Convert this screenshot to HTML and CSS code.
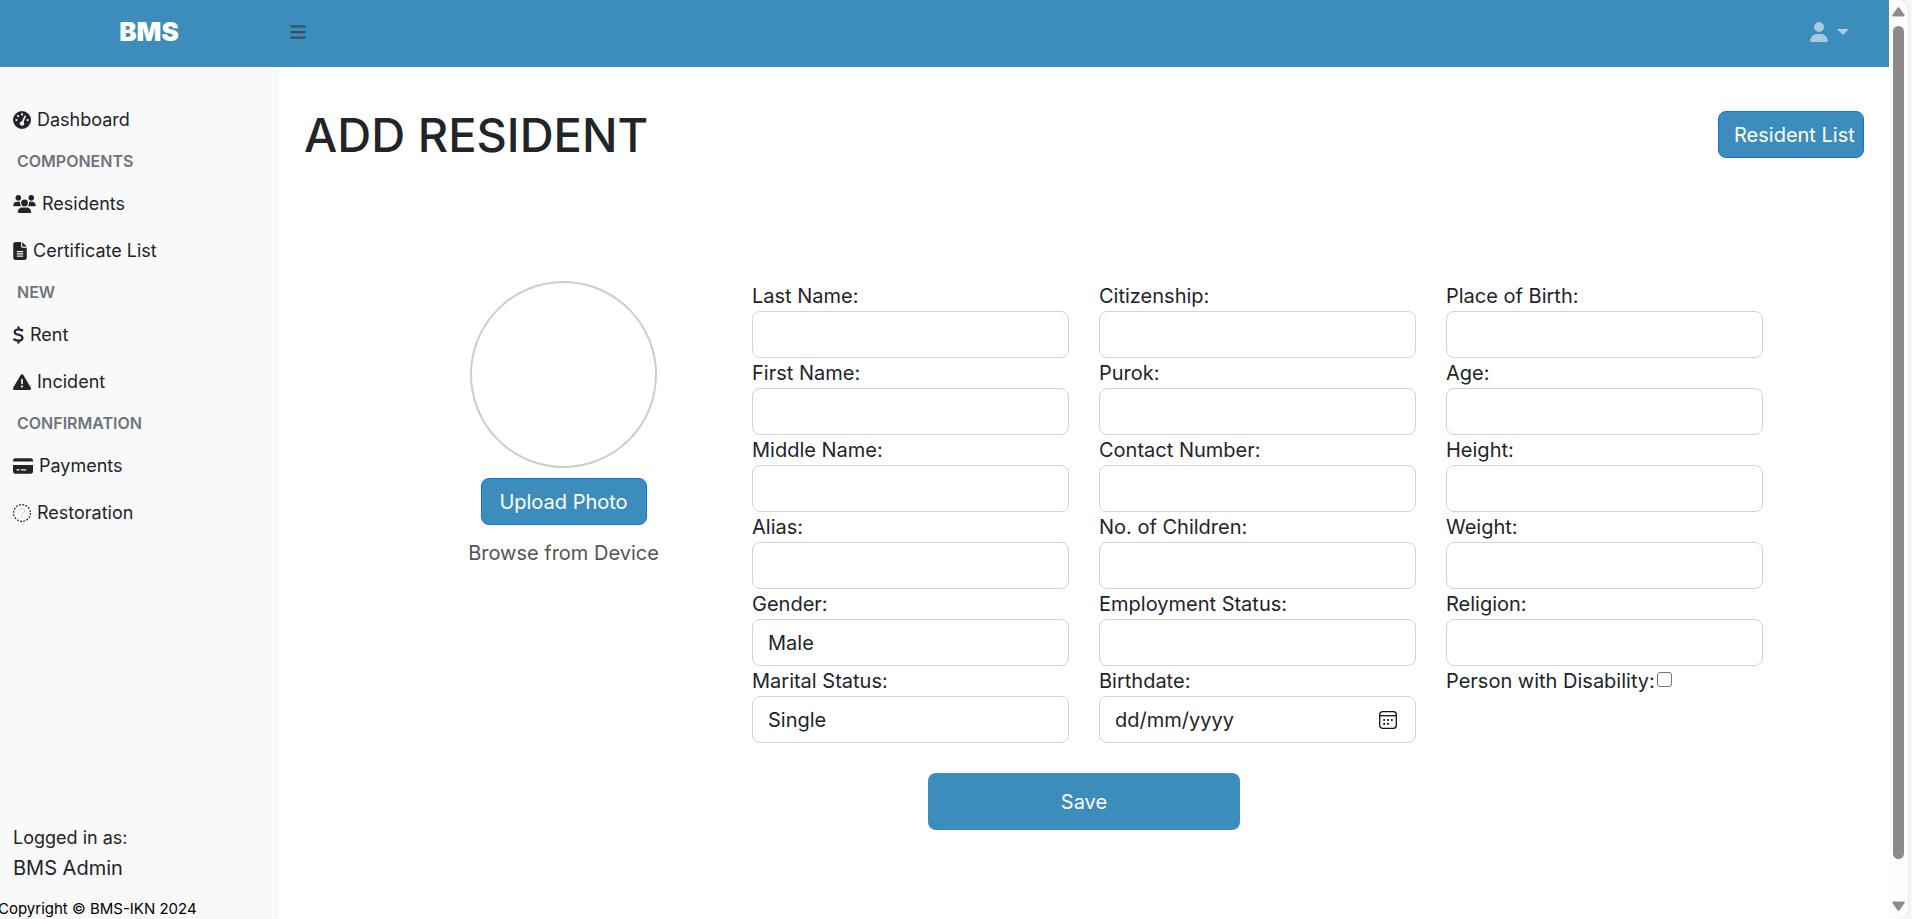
FILE: index.html
```html
<!DOCTYPE html>
<html lang="en-GB">
<head>
<meta charset="utf-8">
<meta name="viewport" content="width=device-width, initial-scale=1">
<title>BMS - Add Resident</title>
<link rel="stylesheet" href="styles.css">
</head>
<body>
<div class="app">
  <header class="topnav">
    <a class="brand" href="#">BMS</a>
    <button class="menu-toggle" type="button" aria-label="Toggle sidebar">
      <svg width="16" height="18" viewBox="0 0 448 512" fill="currentColor"><rect y="64" width="448" height="64" rx="32"/><rect y="224" width="448" height="64" rx="32"/><rect y="384" width="448" height="64" rx="32"/></svg>
    </button>
    <button class="user-menu" type="button" aria-label="User menu">
      <svg width="18" height="20" viewBox="0 0 448 512" fill="currentColor"><path d="M224 256A128 128 0 1 0 224 0a128 128 0 1 0 0 256zm-45.700 48C79.800 304 0 383.800 0 482.300C0 498.700 13.300 512 29.700 512H418.300c16.400 0 29.700-13.300 29.700-29.700C448 383.800 368.200 304 269.700 304H178.300z"/></svg>
      <span class="caret"></span>
    </button>
  </header>

  <aside class="sidebar">
    <nav class="side-links">
      <a class="side-link" href="#"><svg width="18" height="18" viewBox="0 0 512 512" fill="currentColor"><path fill-rule="evenodd" d="M0 256a256 256 0 1 1 512 0A256 256 0 1 1 0 256zM288 96a32 32 0 1 0-64 0 32 32 0 1 0 64 0zM256 416c35.300 0 64-28.700 64-64 0-17.400-6.900-33.100-18.100-44.600L366 161.700c5.300-12.100-.2-26.300-12.300-31.600s-26.300.2-31.600 12.300L257.900 288H256c-35.300 0-64 28.700-64 64s28.700 64 64 64zM176 144a32 32 0 1 0-64 0 32 32 0 1 0 64 0zM96 288a32 32 0 1 0 0-64 32 32 0 1 0 0 64zM416 288a32 32 0 1 0 0-64 32 32 0 1 0 0 64z"/></svg>Dashboard</a>
      <h2 class="side-heading">COMPONENTS</h2>
      <a class="side-link" href="#"><svg width="23" height="18" viewBox="0 0 640 512" fill="currentColor"><path d="M144 0a80 80 0 1 1 0 160A80 80 0 1 1 144 0zM512 0a80 80 0 1 1 0 160A80 80 0 1 1 512 0zM0 298.700C0 239.800 47.800 192 106.700 192h42.700c15.900 0 31 3.500 44.600 9.700-1.300 7.200-1.900 14.700-1.900 22.300 0 38.200 16.800 72.500 43.300 96H21.300C9.600 320 0 310.400 0 298.700zM405.300 320h-.7c26.600-23.500 43.300-57.800 43.300-96 0-7.600-.7-15-1.900-22.300 13.600-6.300 28.700-9.700 44.600-9.700h42.700C592.200 192 640 239.800 640 298.700c0 11.800-9.600 21.300-21.300 21.300H405.300zM224 224a96 96 0 1 1 192 0 96 96 0 1 1-192 0zM128 485.300C128 411.700 187.700 352 261.300 352h117.400C452.300 352 512 411.700 512 485.300c0 14.700-11.900 26.700-26.700 26.700H154.700c-14.700 0-26.700-11.900-26.700-26.700z"/></svg>Residents</a>
      <a class="side-link" href="#"><svg width="14" height="18" viewBox="0 0 384 512" fill="currentColor"><path fill-rule="evenodd" d="M64 0C28.700 0 0 28.700 0 64v384c0 35.300 28.700 64 64 64h256c35.300 0 64-28.700 64-64V160H256c-17.700 0-32-14.300-32-32V0H64zM256 0v128h128L256 0zM112 256h160a16 16 0 0 1 0 32H112a16 16 0 0 1 0-32zm0 64h160a16 16 0 0 1 0 32H112a16 16 0 0 1 0-32zm0 64h160a16 16 0 0 1 0 32H112a16 16 0 0 1 0-32z"/></svg>Certificate List</a>
      <h2 class="side-heading">NEW</h2>
      <a class="side-link" href="#"><svg width="11" height="18" viewBox="0 0 320 512" fill="none" stroke="currentColor" stroke-width="64" stroke-linecap="round"><path d="M160 32v50M160 430v50M270 122c-50-20-95-30-135-26C30 106 20 215 130 242l60 15c120 30 110 155-10 160-50 2-105-12-145-32"/></svg>Rent</a>
      <a class="side-link" href="#"><svg width="18" height="18" viewBox="0 0 512 512" fill="currentColor"><path fill-rule="evenodd" d="M256 32c14.200 0 27.300 7.500 34.500 19.800l216 368c7.300 12.400 7.300 27.700.2 40.100S486.300 480 472 480H40c-14.300 0-27.600-7.700-34.700-20.100s-7-27.800.2-40.100l216-368C228.700 39.500 241.800 32 256 32zm0 128c-13.300 0-24 10.700-24 24v112a24 24 0 0 0 48 0V184c0-13.300-10.700-24-24-24zm32 224a32 32 0 1 0-64 0 32 32 0 1 0 64 0z"/></svg>Incident</a>
      <h2 class="side-heading">CONFIRMATION</h2>
      <a class="side-link" href="#"><svg width="20" height="18" viewBox="0 0 576 512" fill="currentColor"><path fill-rule="evenodd" d="M64 32C28.700 32 0 60.700 0 96v32h576V96c0-35.300-28.700-64-64-64H64zM576 224H0v192c0 35.300 28.700 64 64 64h448c35.300 0 64-28.700 64-64V224zM112 352h64a16 16 0 0 1 0 32h-64a16 16 0 0 1 0-32zm128 0h128a16 16 0 0 1 0 32H240a16 16 0 0 1 0-32z"/></svg>Payments</a>
      <a class="side-link" href="#"><svg width="18" height="18" viewBox="0 0 18 18" fill="none" stroke="currentColor"><circle cx="9" cy="9" r="8.400" stroke-width="1.200" stroke-dasharray="1.900 1.398"/><path d="M6.500 6.500c.3-1.300 1.300-1.800 2.600-1.800 1.600 0 2.700.8 2.700 2 0 1.700-2.700 1.700-2.700 3.800M9.100 12v1.400" stroke-opacity=".2"/></svg>Restoration</a>
    </nav>
    <div class="side-footer">
      <div class="logged">Logged in as:</div>
      <div class="username">BMS Admin</div>
      <div class="copyright">Copyright © BMS-IKN 2024</div>
    </div>
  </aside>

  <main class="main">
    <div class="page-head">
      <h1 class="title">ADD RESIDENT</h1>
      <a class="btn btn-list" href="#">Resident List</a>
    </div>

    <form class="resident-form">
      <div class="fields">
        <div class="photo-col">
          <div class="photo"></div>
          <button class="btn btn-upload" type="button">Upload Photo</button>
          <span class="browse">Browse from Device</span>
        </div>
        <div class="col">
          <label for="last">Last Name:</label><input class="control" id="last" type="text">
          <label for="first">First Name:</label><input class="control" id="first" type="text">
          <label for="middle">Middle Name:</label><input class="control" id="middle" type="text">
          <label for="alias">Alias:</label><input class="control" id="alias" type="text">
          <label for="gender">Gender:</label><select class="control" id="gender"><option>Male</option><option>Female</option></select>
          <label for="marital">Marital Status:</label><select class="control" id="marital"><option>Single</option><option>Married</option></select>
        </div>
        <div class="col">
          <label for="citizenship">Citizenship:</label><input class="control" id="citizenship" type="text">
          <label for="purok">Purok:</label><input class="control" id="purok" type="text">
          <label for="contact">Contact Number:</label><input class="control" id="contact" type="text">
          <label for="children">No. of Children:</label><input class="control" id="children" type="text">
          <label for="employment">Employment Status:</label><input class="control" id="employment" type="text">
          <label for="birthdate">Birthdate:</label>
          <div class="control date">
            <input class="date-input" id="birthdate" type="text" placeholder="dd/mm/yyyy">
            <button class="date-button" type="button" aria-label="Open calendar">
              <svg width="18" height="18" viewBox="0 0 18 18" fill="none" stroke="#111" stroke-width="1.300"><rect x=".7" y=".7" width="16.600" height="16.600" rx="3"/><path d="M.7 4.700h16.600"/><g fill="#111" stroke="none"><circle cx="5.200" cy="9" r="1.100"/><circle cx="9" cy="9" r="1.100"/><circle cx="12.800" cy="9" r="1.100"/><circle cx="5.200" cy="12.800" r="1.100"/><circle cx="9" cy="12.800" r="1.100"/></g></svg>
            </button>
          </div>
        </div>
        <div class="col">
          <label for="birthplace">Place of Birth:</label><input class="control" id="birthplace" type="text">
          <label for="age">Age:</label><input class="control" id="age" type="text">
          <label for="height">Height:</label><input class="control" id="height" type="text">
          <label for="weight">Weight:</label><input class="control" id="weight" type="text">
          <label for="religion">Religion:</label><input class="control" id="religion" type="text">
          <div class="check-row"><label for="pwd">Person with Disability:</label><input class="check" id="pwd" type="checkbox"></div>
        </div>
      </div>
      <button class="save" type="submit">Save</button>
    </form>
  </main>
</div>
<div class="scrollbar" aria-hidden="true">
  <div class="track">
    <svg width="13" height="10" viewBox="0 0 13 10" fill="#8b8b8b"><path d="M5.500.8Q6.500-.4 7.500.8L12.400 7.800Q13.200 9.500 11.500 9.500H1.500Q-.2 9.500.6 7.800z"/></svg>
    <div class="thumb-area"><div class="thumb"></div></div>
    <svg width="13" height="10" viewBox="0 0 13 10" fill="#8b8b8b"><path d="M5.500 9.200Q6.500 10.400 7.500 9.200L12.400 2.200Q13.200.5 11.500.5H1.500Q-.2.5.6 2.200z"/></svg>
  </div>
</div>
</body>
</html>
```

FILE: styles.css
```css
* { box-sizing: border-box; }

body {
  margin: 0;
  display: flex;
  min-height: 100vh;
  font-family: Inter, "Noto Sans", sans-serif;
  font-size: 20px;
  line-height: 30px;
  color: #212529;
  background: #fff;
}

a { color: inherit; text-decoration: none; }

button, input, select {
  font: inherit;
  color: inherit;
}

button { cursor: pointer; }

.app {
  flex: 1;
  min-width: 0;
  display: grid;
  grid-template-columns: 279px 1fr;
  grid-template-rows: 67px 1fr;
}

/* Top bar */
.topnav {
  grid-column: 1 / -1;
  display: flex;
  align-items: center;
  padding-bottom: 3px;
  background: #3c8dbc;
}

.brand {
  width: 279px;
  padding-left: 19px;
  text-align: center;
  color: #fff;
  font-size: 26px;
  font-weight: 900;
}

.menu-toggle, .user-menu {
  display: flex;
  align-items: center;
  padding: 0;
  border: 0;
  background: none;
}

.menu-toggle {
  margin-left: 11px;
  color: #35535c;
}

.user-menu {
  gap: 9px;
  margin-left: auto;
  padding-right: 40px;
  color: #a9cbe1;
}

.caret {
  border: 6px solid transparent;
  border-top-color: currentColor;
  border-bottom: 0;
}

/* Sidebar */
.sidebar {
  display: flex;
  flex-direction: column;
  justify-content: space-between;
  background: #f9f9f9;
}

.side-links { padding-top: 29px; }

.side-link {
  display: flex;
  align-items: center;
  gap: 6px;
  height: 47px;
  padding-left: 13px;
  font-size: 18px;
}

.side-heading {
  margin: 0;
  padding-left: 17px;
  font-size: 16px;
  font-weight: 600;
  line-height: 37px;
  color: #6c757d;
}

.side-footer { padding-left: 13px; }

.logged { font-size: 18px; }

.copyright {
  margin: 16px 0 0 -15px;
  font-size: 15px;
  line-height: 20px;
  color: #000;
}

/* Main area */
.main { padding: 44px 25px 80px; }

.page-head {
  display: flex;
  justify-content: space-between;
  align-items: center;
}

.title {
  margin: 0;
  font-size: 47px;
  font-weight: 500;
  line-height: 47px;
}

.btn {
  height: 47px;
  border: 1px solid #0d6efd;
  border-radius: 8px;
  background: #3c8dbc;
  color: #fff;
  line-height: 46px;
  white-space: nowrap;
}

.btn-list {
  min-width: 146px;
  padding: 0 7px 0 15px;
}

.btn-upload {
  min-width: 166px;
  margin-top: 10px;
  padding: 0 15px;
}

.resident-form {
  display: flex;
  flex-direction: column;
  align-items: center;
  padding: 123px 101px 0;
}

.fields {
  align-self: stretch;
  display: grid;
  grid-template-columns: repeat(4, 1fr);
  gap: 30px;
}

.photo-col {
  display: flex;
  flex-direction: column;
  align-items: center;
}

.photo {
  width: 187px;
  height: 187px;
  border: 2px solid #ccc;
  border-radius: 50%;
}

.browse {
  margin-top: 13px;
  color: #555;
}

.col {
  display: flex;
  flex-direction: column;
  min-width: 0;
}

.control {
  width: 100%;
  height: 47px;
  padding: 0 15px;
  border: 1px solid #ced4da;
  border-radius: 8px;
  background: #fff;
  appearance: none;
}

.date {
  display: flex;
  align-items: center;
  padding-right: 18px;
}

.date-input {
  flex: 1;
  min-width: 0;
  padding: 0;
  border: 0;
  outline: 0;
  background: none;
}

.date-input::placeholder { color: #212529; opacity: 1; }

.date-button {
  display: flex;
  padding: 0;
  border: 0;
  background: none;
}

.check-row { display: flex; }

.check {
  width: 15px;
  height: 15px;
  margin: 6px 0 0 2px;
  border: 1px solid #767676;
  border-radius: 3px;
  background: #fff;
  appearance: none;
}

.check:checked { background: #3c8dbc; }

.save {
  width: 23%;
  min-width: 200px;
  height: 57px;
  margin-top: 30px;
  border: 0;
  border-radius: 8px;
  background: #3c8dbc;
  color: #fff;
}

/* Scroll track */
.scrollbar {
  width: 23px;
  background: #f6f6f6;
}

.track {
  width: 20px;
  height: 100vh;
  display: flex;
  flex-direction: column;
  align-items: center;
  padding: 7px 0 8px;
  border-right: 1px solid #e6e6e6;
  border-radius: 0 10px 10px 0;
  background: #fcfcfc;
}

.thumb-area {
  flex: 1;
  margin-top: 9px;
  padding-bottom: 42px;
}

.thumb {
  width: 11px;
  height: 100%;
  border-radius: 6px;
  background: #8b8b8b;
}
```
